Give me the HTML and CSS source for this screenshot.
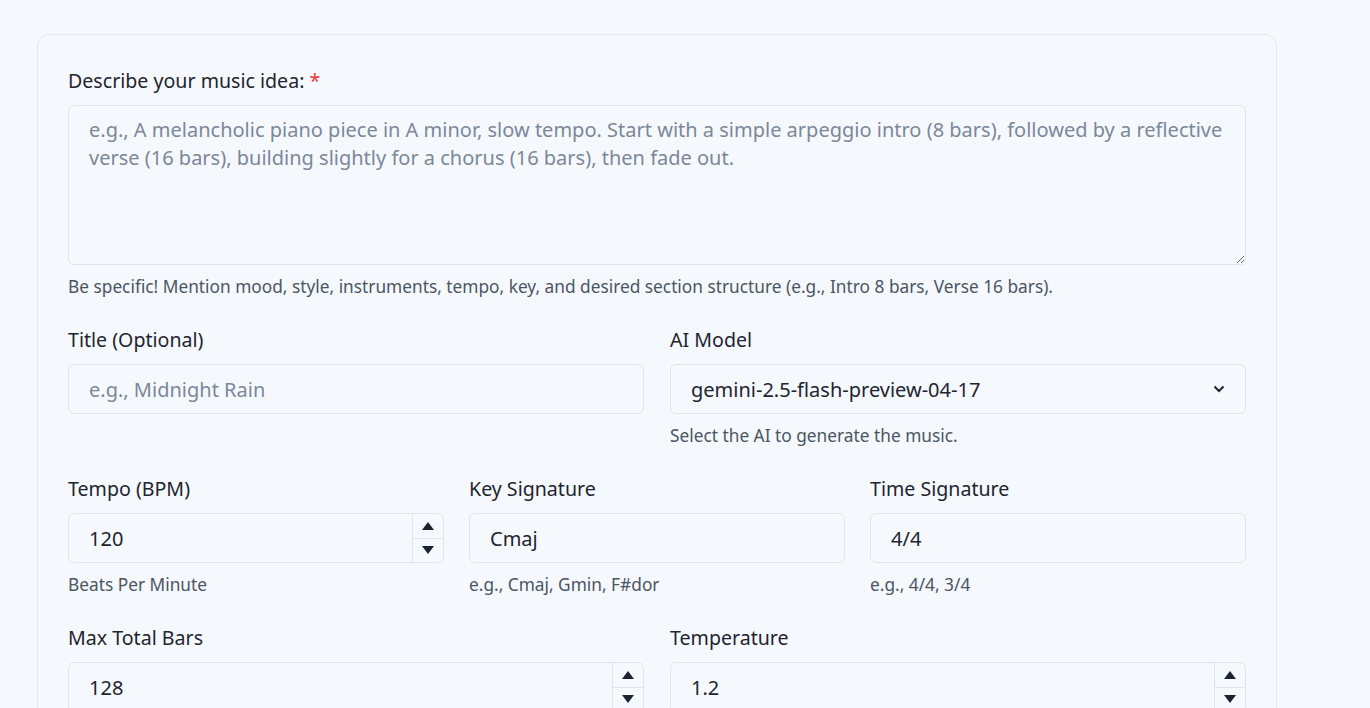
FILE: index.html
```html
<!DOCTYPE html>
<html lang="en">
<head>
<meta charset="utf-8">
<title>Music Idea</title>
<link rel="stylesheet" href="styles.css">
</head>
<body>
<main class="card">
  <div class="field">
    <label class="label" for="idea">Describe your music idea: <span class="req">*</span></label>
    <textarea id="idea" class="textarea" placeholder="e.g., A melancholic piano piece in A minor, slow tempo. Start with a simple arpeggio intro (8 bars), followed by a reflective verse (16 bars), building slightly for a chorus (16 bars), then fade out."></textarea>
    <p class="help">Be specific! Mention mood, style, instruments, tempo, key, and desired section structure (e.g., Intro 8 bars, Verse 16 bars).</p>
  </div>

  <div class="row two">
    <div class="field">
      <label class="label" for="title">Title (Optional)</label>
      <input id="title" class="input" type="text" placeholder="e.g., Midnight Rain">
    </div>
    <div class="field">
      <label class="label" for="model">AI Model</label>
      <div class="select">
        <span class="select-value">gemini-2.5-flash-preview-04-17</span>
        <svg class="chevron" width="12" height="8" viewBox="0 0 12 8"><path d="M1.5 1.5 L6 6 L10.5 1.5" fill="none" stroke="#1f2430" stroke-width="2"/></svg>
      </div>
      <p class="help">Select the AI to generate the music.</p>
    </div>
  </div>

  <div class="row three">
    <div class="field">
      <label class="label" for="tempo">Tempo (BPM)</label>
      <div class="num">
        <input id="tempo" class="num-input" type="text" value="120">
        <div class="spin">
          <span class="spin-btn"><span class="tri-up"></span></span>
          <span class="spin-btn"><span class="tri-down"></span></span>
        </div>
      </div>
      <p class="help">Beats Per Minute</p>
    </div>
    <div class="field">
      <label class="label" for="key">Key Signature</label>
      <input id="key" class="input" type="text" value="Cmaj">
      <p class="help">e.g., Cmaj, Gmin, F#dor</p>
    </div>
    <div class="field">
      <label class="label" for="time">Time Signature</label>
      <input id="time" class="input" type="text" value="4/4">
      <p class="help">e.g., 4/4, 3/4</p>
    </div>
  </div>

  <div class="row two">
    <div class="field">
      <label class="label" for="bars">Max Total Bars</label>
      <div class="num">
        <input id="bars" class="num-input" type="text" value="128">
        <div class="spin">
          <span class="spin-btn"><span class="tri-up"></span></span>
          <span class="spin-btn"><span class="tri-down"></span></span>
        </div>
      </div>
    </div>
    <div class="field">
      <label class="label" for="temp">Temperature</label>
      <div class="num">
        <input id="temp" class="num-input" type="text" value="1.2">
        <div class="spin">
          <span class="spin-btn"><span class="tri-up"></span></span>
          <span class="spin-btn"><span class="tri-down"></span></span>
        </div>
      </div>
    </div>
  </div>
</main>
</body>
</html>
```

FILE: styles.css
```css
* { box-sizing: border-box; }

html, body {
  margin: 0;
  padding: 0;
  background: #f5f8fc;
  font-family: "Noto Sans", "Open Sans", sans-serif;
  color: #1f2430;
  overflow: hidden;
}

body {
  padding: 34px 0 0 37px;
}

.card {
  width: 1240px;
  min-height: 800px;
  background: #f5f9fd;
  border: 1px solid #e3e8ef;
  border-radius: 12px;
  padding: 32px 30px;
  display: flex;
  flex-direction: column;
  gap: 27px;
}

.row {
  display: grid;
  column-gap: 25px;
}
.row.two { grid-template-columns: 1fr 1fr; column-gap: 26px; }
.row.three { grid-template-columns: 1fr 1fr 1fr; }

.field {
  display: flex;
  flex-direction: column;
  min-width: 0;
}

.label {
  font-size: 19.6px;
  line-height: 27px;
  margin-bottom: 11px;
  color: #1f2430;
}

.req { color: #e53e3e; }

.textarea, .input, .select, .num {
  background: #f5f9fd;
  border: 1px solid #dfe5ec;
  border-radius: 6px;
  font-family: inherit;
  font-size: 20px;
  color: #1f2430;
}

.textarea {
  height: 160px;
  padding: 10px 20px;
  line-height: 28px;
  resize: vertical;
  width: 100%;
  outline: none;
}

.input {
  height: 50px;
  padding: 0 20px;
  width: 100%;
  outline: none;
}

::placeholder { color: #7c879a; opacity: 1; }

.select {
  height: 50px;
  padding: 0 20px;
  display: flex;
  align-items: center;
  justify-content: space-between;
}

.num {
  height: 50px;
  display: flex;
  overflow: hidden;
}

.num-input {
  flex: 1;
  min-width: 0;
  border: 0;
  background: transparent;
  font-family: inherit;
  font-size: 20px;
  color: #1f2430;
  padding: 0 20px;
  outline: none;
}

.spin {
  width: 31px;
  border-left: 1px solid #dfe5ec;
  display: flex;
  flex-direction: column;
}

.spin-btn {
  flex: 1;
  display: flex;
  align-items: center;
  justify-content: center;
}
.spin-btn + .spin-btn { border-top: 1px solid #dfe5ec; }

.tri-up {
  width: 0; height: 0;
  border-left: 6px solid transparent;
  border-right: 6px solid transparent;
  border-bottom: 8px solid #1c2330;
}
.tri-down {
  width: 0; height: 0;
  border-left: 6px solid transparent;
  border-right: 6px solid transparent;
  border-top: 8px solid #1c2330;
}

.help {
  margin: 10px 0 0;
  font-size: 17.3px;
  line-height: 24px;
  color: #4b5563;
}
```
